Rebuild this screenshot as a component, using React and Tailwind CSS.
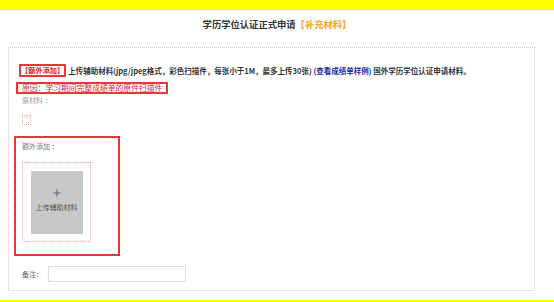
import React from "react";

const App = () => {
  return (
    <div className="w-[554px] h-[302px] bg-white overflow-hidden font-['Noto_Sans_CJK_SC',sans-serif]">
      {/* top bar */}
      <div className="h-[10px] bg-[#ffff00]" />

      {/* title */}
      <div className="h-[37px] pt-[7px] text-center text-[9.3px] leading-[14px] font-bold text-[#333]">
        学历学位认证正式申请<span className="text-[#f5a623]">【补充材料】</span>
      </div>

      {/* form */}
      <div className="ml-[8px] w-[527px] border border-dotted border-[#c8c8c8] pt-[16px] pb-[8px] pl-[7px]">
        <div className="flex items-center">
          <span className="ml-[3px] border-2 border-[#e53935] text-[7.2px] leading-[9px] font-bold text-[#e0202e] whitespace-nowrap">
            【额外添加】
          </span>
          <span className="ml-[2px] text-[7.5px] leading-[9px] font-bold text-[#333] whitespace-nowrap">
            上传辅助材料(jpg/jpeg格式，彩色扫描件，每张小于1M，最多上传30张){" "}
            <span className="text-[#2222aa]">(查看成绩单样例)</span> 国外学历学位认证申请材料。
          </span>
        </div>

        <div className="mt-[5px] w-[152px] border-2 border-[#e53935] pl-[4px] text-[7.8px] leading-[8px] whitespace-nowrap">
          <span className="text-[#b04050]">原因：</span>
          <span className="text-[#e0203a]">学习期间完整成绩单的原件扫描件</span>
        </div>

        <div className="ml-[6px] text-[7px] leading-[12px] text-[#999]">原材料 ：</div>

        <div className="ml-[6px] mt-[9px] w-[9px] h-[10px] border border-dotted border-[#e8a0a0]" />

        <div className="ml-[-2px] mt-[11px] w-[106px] h-[120px] border-2 border-[#e53935] pt-[2px] pl-[6px]">
          <div className="text-[7px] leading-[12px] text-[#777]">额外添加 ：</div>
          <div className="mt-[10px] w-[69px] h-[80px] border border-dotted border-[#e8a0a0] flex items-center justify-center">
            <div className="w-[52px] h-[63px] bg-[#c8c8c8] flex flex-col items-center pt-[18px]">
              <svg width="8" height="8" viewBox="0 0 8 8">
                <path d="M4 0.5V7.5M0.5 4H7.5" stroke="#666" strokeWidth="1.2" />
              </svg>
              <div className="mt-[5px] text-[7px] leading-[10px] text-[#555]">上传辅助材料</div>
            </div>
          </div>
        </div>

        <div className="mt-[10px] flex items-center">
          <span className="ml-[6px] w-[26px] text-[7px] leading-[16px] text-[#666]">备注：</span>
          <div className="w-[138px] h-[16px] border border-[#ddd] bg-white" />
        </div>
      </div>

      <div className="mt-[9px] h-[2px] bg-[#ffff00]" />
    </div>
  );
};

export default App;
